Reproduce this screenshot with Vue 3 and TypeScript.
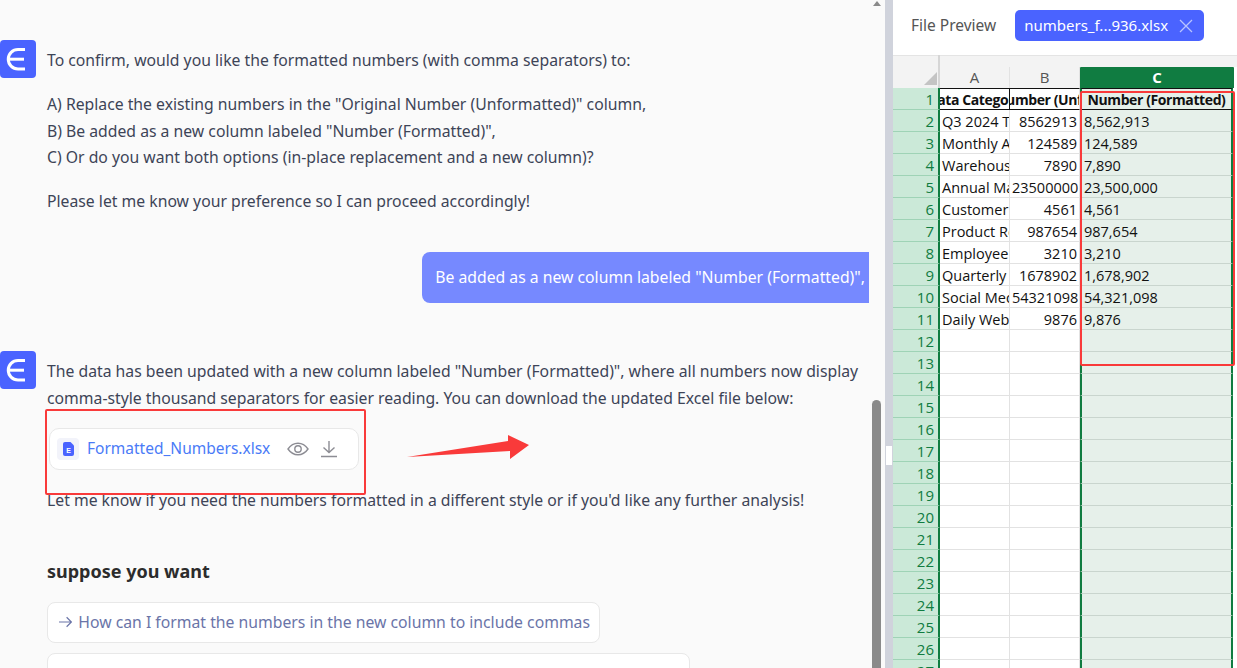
<script setup lang="ts">
interface SheetRow {
  name: string
  raw: string
  formatted: string
}

const dataRows: SheetRow[] = [
  { name: 'Q3 2024 Total Revenue', raw: '8562913', formatted: '8,562,913' },
  { name: 'Monthly Active Users', raw: '124589', formatted: '124,589' },
  { name: 'Warehouse Inventory', raw: '7890', formatted: '7,890' },
  { name: 'Annual Marketing Budget', raw: '23500000', formatted: '23,500,000' },
  { name: 'Customer Complaints', raw: '4561', formatted: '4,561' },
  { name: 'Product Returns', raw: '987654', formatted: '987,654' },
  { name: 'Employee Count', raw: '3210', formatted: '3,210' },
  { name: 'Quarterly Orders', raw: '1678902', formatted: '1,678,902' },
  { name: 'Social Media Reach', raw: '54321098', formatted: '54,321,098' },
  { name: 'Daily Website Visits', raw: '9876', formatted: '9,876' },
]

// 第 1 行是表头，后面补空行铺满预览区
const blankRows = Array.from({ length: 16 }, (_, i) => i + 12)
</script>

<template>
  <div class="page">
    <section class="chat">
      <div class="chat-scroll">
        <div class="message first">
          <div class="avatar">
            <svg width="36" height="38" viewBox="0 0 36 38" fill="none" stroke="#fff" stroke-width="3">
              <path d="M25 9.500h-7a9.750 9.750 0 0 0 0 19.500h7" />
              <path d="M9 19.200h15" />
            </svg>
          </div>
          <div class="body">
            <p>To confirm, would you like the formatted numbers (with comma separators) to:</p>
            <p>
              A) Replace the existing numbers in the "Original Number (Unformatted)" column,<br />
              B) Be added as a new column labeled "Number (Formatted)",<br />
              C) Or do you want both options (in-place replacement and a new column)?
            </p>
            <p>Please let me know your preference so I can proceed accordingly!</p>
          </div>
        </div>

        <div class="user-row">
          <div class="bubble">Be added as a new column labeled "Number (Formatted)",</div>
        </div>

        <div class="message second">
          <div class="avatar">
            <svg width="36" height="38" viewBox="0 0 36 38" fill="none" stroke="#fff" stroke-width="3">
              <path d="M25 9.500h-7a9.750 9.750 0 0 0 0 19.500h7" />
              <path d="M9 19.200h15" />
            </svg>
          </div>
          <div class="body">
            <p class="tight">
              The data has been updated with a new column labeled "Number (Formatted)", where all numbers now display
              comma-style thousand separators for easier reading. You can download the updated Excel file below:
            </p>
            <div class="file-card">
              <span class="file-tile">
                <svg width="11" height="14" viewBox="0 0 11 14">
                  <path d="M2 0h5.500L11 3.500V12a2 2 0 0 1-2 2H2a2 2 0 0 1-2-2V2a2 2 0 0 1 2-2z" fill="#4a63ff" />
                  <text x="3.200" y="10.800" font-size="7" font-weight="700" fill="#fff">E</text>
                </svg>
              </span>
              <span class="file-name">Formatted_Numbers.xlsx</span>
              <svg class="file-eye" width="22" height="14" viewBox="0 0 22 14" fill="none" stroke="#8d8d94" stroke-width="1.400">
                <path d="M1 7c2.600-3.800 6-5.800 10-5.800S18.400 3.200 21 7c-2.600 3.800-6 5.800-10 5.800S3.600 10.800 1 7z" />
                <circle cx="11" cy="7" r="3.200" />
              </svg>
              <svg class="file-down" width="18" height="18" viewBox="0 0 18 18" fill="none" stroke="#8d8d94" stroke-width="1.400">
                <path d="M9 1v11M3.500 7.500 9 12.500l5.500-5M1 16.500h16" />
              </svg>
            </div>
            <p>Let me know if you need the numbers formatted in a different style or if you'd like any further analysis!</p>
          </div>
        </div>

        <h3 class="suggest-title">suppose you want</h3>
        <div class="suggest">
          <svg width="14" height="12" viewBox="0 0 14 12" fill="none" stroke="#6a74a8" stroke-width="1.200">
            <path d="M0 6h13M8 1l5 5-5 5" />
          </svg>
          <span>How can I format the numbers in the new column to include commas</span>
        </div>
        <div class="suggest wide"></div>
      </div>

      <div class="scrollbar">
        <span class="scroll-up"></span>
        <div class="scroll-thumb"></div>
      </div>

      <!-- 截图上的红色标注 -->
      <div class="mark mark-file"></div>
      <svg class="mark-arrow" width="126" height="26" viewBox="0 0 126 26">
        <path d="M1 22 102 6 102 0 123 10 104 24 104 16z" fill="#f93a3a" />
      </svg>
    </section>

    <div class="divider"><span class="handle"></span></div>

    <section class="preview">
      <header class="preview-head">
        <span class="preview-title">File Preview</span>
        <div class="tab">
          <span class="tab-name">numbers_f...936.xlsx</span>
          <svg width="14" height="14" viewBox="0 0 14 14" stroke="#b9c3ff" stroke-width="1.300">
            <path d="M1 1l12 12M13 1 1 13" />
          </svg>
        </div>
      </header>

      <div class="sheet">
        <div class="top-band"></div>
        <div class="row col-head">
          <div class="rownum corner"><span class="corner-tri"></span></div>
          <div class="colh a">A</div>
          <div class="colh b">B</div>
          <div class="colh c">C</div>
        </div>
        <div class="row">
          <div class="rownum">1</div>
          <div class="cell a title split">Data Category</div>
          <div class="cell b title">Original Number (Unformatted)</div>
          <div class="cell c title">Number (Formatted)</div>
        </div>
        <div v-for="(row, i) in dataRows" :key="row.name" class="row">
          <div class="rownum">{{ i + 2 }}</div>
          <div class="cell a">{{ row.name }}</div>
          <div class="cell b num">{{ row.raw }}</div>
          <div class="cell c">{{ row.formatted }}</div>
        </div>
        <div v-for="n in blankRows" :key="n" class="row">
          <div class="rownum">{{ n }}</div>
          <div class="cell a"></div>
          <div class="cell b"></div>
          <div class="cell c"></div>
        </div>
      </div>

      <div class="mark mark-col"></div>
    </section>
  </div>
</template>

<style>
html,
body {
  margin: 0;
  overflow: hidden;
}
</style>

<style scoped>
.page {
  display: flex;
  width: 1237px;
  height: 668px;
  overflow: hidden;
  font-family: "Noto Sans", "Open Sans", sans-serif;
  color: #3d4457;
  background: #fff;
}

.chat {
  position: relative;
  display: flex;
  width: 885px;
  flex-shrink: 0;
  background: #fafafa;
}

.chat-scroll {
  width: 869px;
  flex-shrink: 0;
  height: 668px;
  overflow: hidden;
  font-size: 15.75px;
  line-height: 26.5px;
}

.message {
  display: flex;
  gap: 11px;
}

.message.first {
  margin-top: 40px;
}

.message.second {
  margin-top: 48px;
}

.avatar {
  width: 36px;
  height: 38px;
  flex-shrink: 0;
  border-radius: 4px;
  background: #4a63ff;
}

.avatar svg {
  display: block;
}

.body {
  padding-top: 7px;
  min-width: 0;
}

.body p {
  margin: 0 0 17.5px;
}

.body p.tight {
  margin-bottom: 0;
}

.body p:last-child {
  margin-bottom: 0;
}

.user-row {
  display: flex;
  justify-content: flex-end;
  margin-top: 37.500px;
}

.bubble {
  height: 51px;
  padding-left: 13px;
  padding-right: 4px;
  display: flex;
  align-items: center;
  white-space: nowrap;
  color: #fff;
  background: #7689ff;
  border-radius: 8px 0 0 8px;
}

.file-card {
  display: flex;
  align-items: center;
  width: 310px;
  height: 42px;
  box-sizing: border-box;
  margin: 17px 0 17px 2px;
  padding-left: 7px;
  background: #fff;
  border: 1px solid #e8e8e8;
  border-radius: 10px;
}

.file-tile {
  display: flex;
  align-items: center;
  justify-content: center;
  width: 22px;
  height: 22px;
  border-radius: 4px;
  background: #f2f3fa;
}

.file-tile text {
  font-family: "Liberation Sans", sans-serif;
}

.file-name {
  margin-left: 8px;
  padding-bottom: 2px;
  font-size: 15.5px;
  color: #4a7bf7;
  white-space: nowrap;
}

.file-eye {
  margin-left: 17px;
}

.file-down {
  margin-left: 11px;
}

.suggest-title {
  margin: 44px 0 18px 47px;
  font-size: 18px;
  line-height: 26px;
  font-weight: 700;
  color: #2c2c2c;
}

.suggest {
  box-sizing: border-box;
  width: 553px;
  height: 41px;
  margin-left: 47px;
  padding: 0 9px 0 11px;
  display: flex;
  align-items: center;
  gap: 6px;
  white-space: nowrap;
  color: #6a74a8;
  background: #fff;
  border: 1px solid #e8e8e8;
  border-radius: 8px;
}

.suggest.wide {
  width: 643px;
  margin-top: 10px;
}

.scrollbar {
  position: relative;
  flex: 1;
  padding: 400px 4px 0 3px;
}

.scroll-up {
  position: absolute;
  top: 1px;
  left: 4px;
  width: 0;
  height: 0;
  border-left: 4px solid transparent;
  border-right: 4px solid transparent;
  border-bottom: 5px solid #8a8a8a;
}

.scroll-thumb {
  height: 268px;
  background: #8a8a8a;
  border-radius: 5px 5px 0 0;
}

.divider {
  position: relative;
  width: 8px;
  flex-shrink: 0;
  background: #d0d3dc;
}

.handle {
  position: absolute;
  top: 446px;
  left: 1px;
  width: 6px;
  height: 19px;
  background: #fff;
}

.preview {
  position: relative;
  flex: 1;
  min-width: 0;
}

.preview-head {
  display: flex;
  align-items: center;
  gap: 19px;
  height: 51px;
  padding: 0 0 4px 18px;
  box-sizing: content-box;
}

.preview-title {
  font-size: 15.500px;
  margin-bottom: 2px;
  color: #555;
}

.tab {
  display: flex;
  align-items: center;
  justify-content: space-between;
  width: 189px;
  height: 31px;
  box-sizing: border-box;
  padding: 0 11px 0 9px;
  font-size: 15px;
  color: #fff;
  background: #4a63ff;
  border-radius: 5px;
}

.tab-name {
  margin-bottom: 1px;
}

.sheet {
  font-family: "Open Sans", "Noto Sans", sans-serif;
  font-size: 14.500px;
  color: #111;
}

.top-band {
  height: 12px;
  background: #f3f3f3;
  border-top: 1px solid #e4e4e4;
  box-sizing: border-box;
}

.row {
  display: flex;
  height: 22px;
  box-sizing: border-box;
}

.rownum {
  width: 47px;
  flex-shrink: 0;
  box-sizing: border-box;
  padding: 1px 4px 0 0;
  text-align: right;
  line-height: 21px;
  font-size: 15px;
  color: #107c41;
  background: #cbe9d8;
  border-bottom: 1px solid #9fd3b6;
  border-right: 2px solid #107c41;
}

.corner {
  position: relative;
  background: #f3f3f3;
  border-right: 2px solid #d6d6d6;
  border-bottom: 0;
}

.corner::before {
  content: "";
  position: absolute;
  top: -12px;
  right: -2px;
  width: 2px;
  height: 12px;
  background: #d6d6d6;
}

.corner-tri {
  position: absolute;
  right: 1px;
  bottom: 3px;
  width: 0;
  height: 0;
  border-left: 13px solid transparent;
  border-bottom: 13px solid #c4c4c4;
}

.col-head {
  height: 21px;
}

.colh {
  box-sizing: border-box;
  text-align: center;
  line-height: 21px;
  font-size: 15px;
  color: #555;
  background: #f3f3f3;
  border-right: 1px solid #e2e2e2;
}

.colh.c {
  width: 154px;
  margin-right: 3px;
  font-weight: 700;
  color: #fff;
  background: #107c41;
  border-right: 0;
  border-radius: 1px 1px 0 0;
}

.a {
  width: 70px;
  flex-shrink: 0;
}

.b {
  width: 70px;
  flex-shrink: 0;
}

.c {
  width: 153px;
  flex-shrink: 0;
}

.cell {
  box-sizing: border-box;
  overflow: hidden;
  white-space: nowrap;
  padding: 2px 2px 0;
  line-height: 20px;
  background: #fff;
  border-right: 1px solid #e2e2e2;
  border-bottom: 1px solid #e2e2e2;
}

.cell.num {
  text-align: right;
}

.cell.c {
  background: #e6f0ea;
  border-left: 2px solid #107c41;
  border-right: 2px solid #107c41;
  border-bottom-color: #c9d5ce;
}

.cell.title {
  display: flex;
  justify-content: center;
  padding: 0;
  line-height: 22px;
  font-size: 14px;
  letter-spacing: -0.4px;
  font-weight: 700;
  border-top: 1px solid #111;
  border-bottom-color: #111;
}

.cell.split {
  border-right-color: #111;
}

.mark {
  position: absolute;
  box-sizing: border-box;
  border: 2px solid #f93a3a;
  border-radius: 2px;
  pointer-events: none;
}

.mark-file {
  left: 45px;
  top: 409px;
  width: 321px;
  height: 86px;
}

.mark-arrow {
  position: absolute;
  left: 406px;
  top: 435px;
}

.mark-col {
  left: 187px;
  top: 91px;
  width: 155px;
  height: 275px;
}
</style>
